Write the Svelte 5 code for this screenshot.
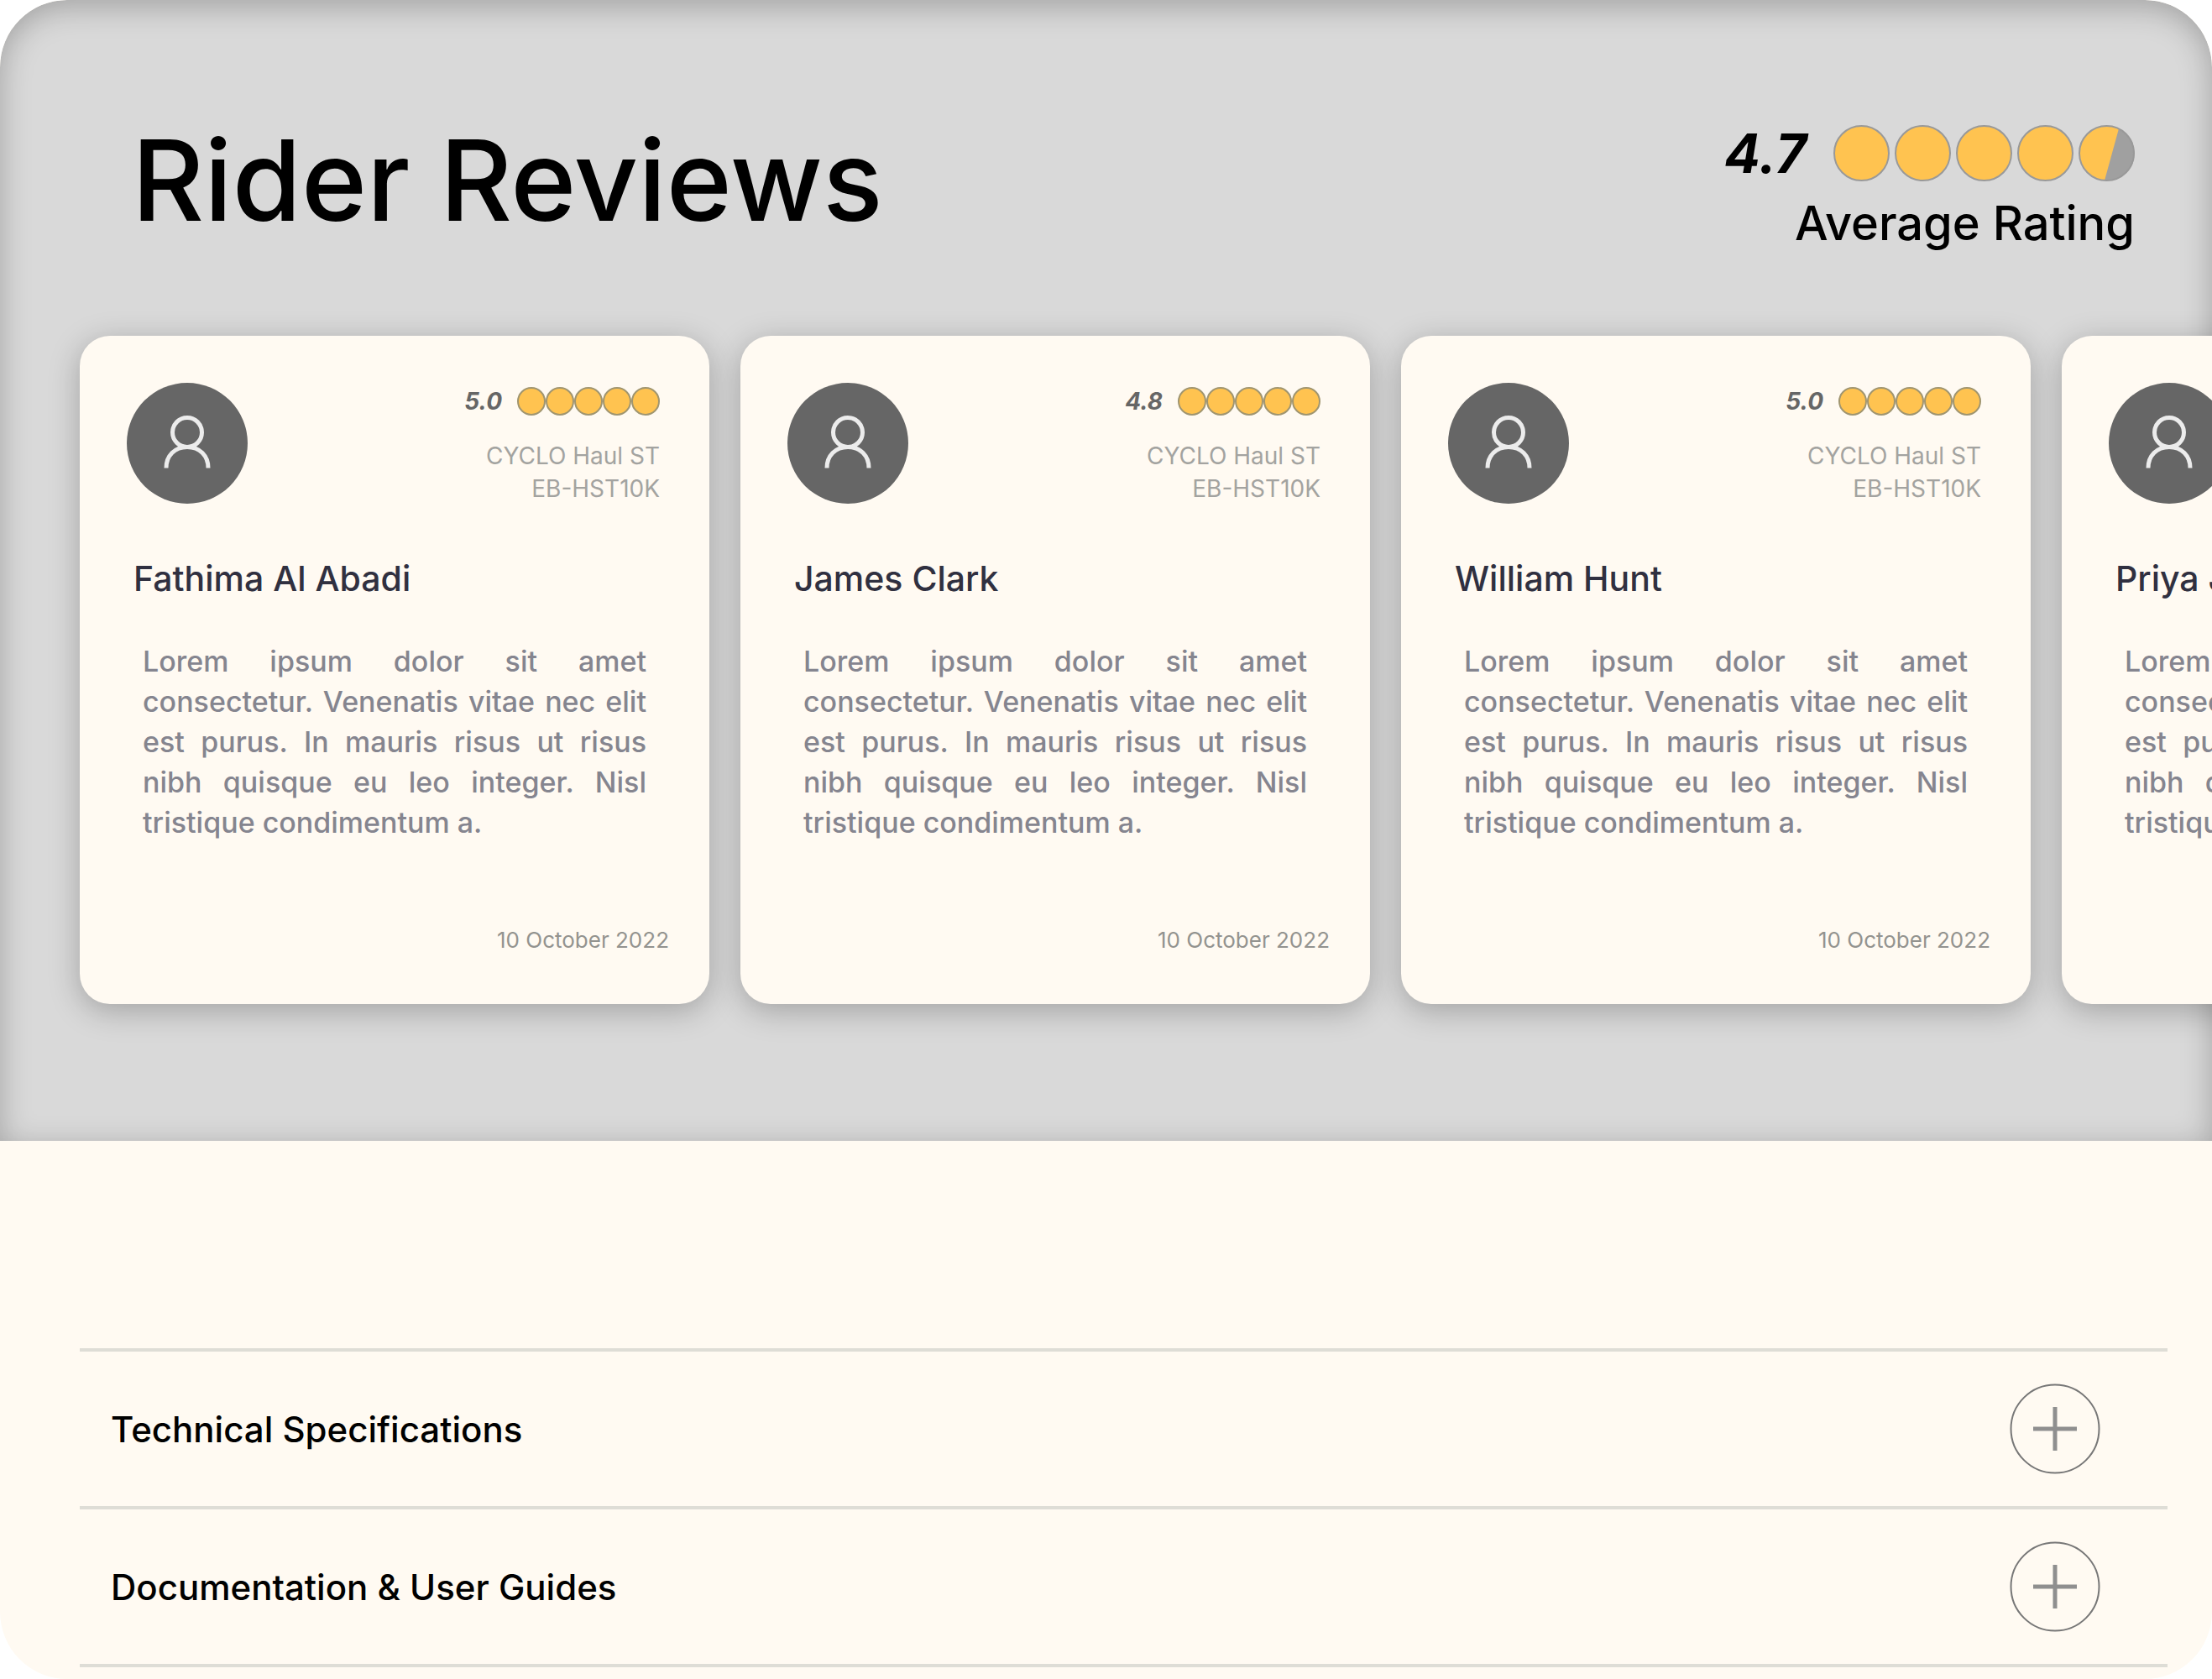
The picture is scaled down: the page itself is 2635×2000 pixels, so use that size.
<script>
  const excerpt =
    'Lorem ipsum dolor sit amet consectetur. Venenatis vitae nec elit est purus. In mauris risus ut risus nibh quisque eu leo integer. Nisl tristique condimentum a.';

  const reviews = [
    { name: 'Fathima Al Abadi', score: '5.0' },
    { name: 'James Clark', score: '4.8' },
    { name: 'William Hunt', score: '5.0' },
    { name: 'Priya Jain', score: '4.9' }
  ];

  const topics = ['Technical Specifications', 'Documentation & User Guides'];
  const dots = [1, 2, 3, 4, 5];

  let open = $state(null);
</script>

<main class="page">
  <section class="reviews">
    <header class="intro">
      <h1>Rider Reviews</h1>
      <div class="average">
        <div class="average-score">
          <strong>4.7</strong>
          <div class="average-dots">
            {#each dots as dot}
              <svg class="dot" viewBox="0 0 67 67" aria-hidden="true">
                <circle class="disc" cx="33.5" cy="33.5" r="32.5" />
                {#if dot === 5}
                  <path class="rest" d="M48 4.2A32.5 32.5 0 0 1 31 66Z" />
                {/if}
                <circle class="ring" cx="33.5" cy="33.5" r="32.5" />
              </svg>
            {/each}
          </div>
        </div>
        <p>Average Rating</p>
      </div>
    </header>

    <div class="cards">
      {#each reviews as review}
        <article class="card">
          <div class="top">
            <svg class="avatar" viewBox="0 0 144 144" aria-hidden="true">
              <circle class="avatar-bg" cx="72" cy="72" r="72" />
              <circle class="person" cx="72" cy="59" r="17.5" />
              <path class="person" d="M47 101.500C47 87 57 76.500 72 76.500S97 87 97 101.500" />
            </svg>
            <div class="meta">
              <div class="score">
                <em>{review.score}</em>
                <div class="score-dots">
                  {#each dots as dot}
                    <span class="small-dot"></span>
                  {/each}
                </div>
              </div>
              <p class="model">CYCLO Haul ST<br />EB-HST10K</p>
            </div>
          </div>
          <h2>{review.name}</h2>
          <p class="text">{excerpt}</p>
          <time datetime="2022-10-10">10 October 2022</time>
        </article>
      {/each}
    </div>
  </section>

  <section class="topics">
    {#each topics as topic, i}
      <button
        class="topic"
        type="button"
        aria-expanded={open === i}
        onclick={() => (open = open === i ? null : i)}
      >
        <span>{topic}</span>
        <svg class="plus" viewBox="0 0 108 108" aria-hidden="true">
          <circle cx="54" cy="54" r="52.5" />
          <path d="M28 54H80M54 28V80" />
        </svg>
      </button>
    {/each}
  </section>
</main>

<style>
  :global(body) {
    margin: 0;
    background: #fff;
  }

  .page {
    overflow: hidden;
    min-height: 100vh;
    box-sizing: border-box;
    border-radius: 80px;
    background: #fffaf2;
    font-family: Inter, 'Liberation Sans', sans-serif;
    color: #000;
  }

  h1,
  h2,
  p {
    margin: 0;
    font-weight: 500;
  }

  .reviews {
    overflow: hidden;
    padding: 145px 0 163px 95px;
    border-radius: 80px 80px 0 0;
    background: #d9d9d9;
    box-shadow: inset 0 8px 36px rgba(0, 0, 0, 0.25);
  }

  .intro {
    display: flex;
    justify-content: space-between;
    align-items: flex-start;
    height: 255px;
    padding: 0 92px 0 62px;
    box-sizing: border-box;
  }

  h1 {
    font-size: 133px;
    line-height: 140px;
  }

  .average {
    display: flex;
    flex-direction: column;
    align-items: flex-end;
    gap: 16px;
    padding-top: 4px;
  }

  .average-score {
    display: flex;
    align-items: center;
    gap: 32px;
  }

  .average strong {
    font-size: 64px;
    line-height: 64px;
    font-style: italic;
    font-weight: 700;
  }

  .average-dots {
    display: flex;
    gap: 6px;
  }

  .average p {
    font-size: 56px;
    line-height: 68px;
  }

  .dot {
    width: 67px;
    height: 67px;
  }

  .disc {
    fill: #ffc350;
  }

  .rest {
    fill: #a0a0a0;
  }

  .ring {
    fill: none;
    stroke: #999;
    stroke-width: 2;
  }

  .cards {
    display: flex;
    gap: 37px;
  }

  .card {
    display: flex;
    flex: 0 0 750px;
    flex-direction: column;
    box-sizing: border-box;
    height: 796px;
    padding: 56px 48px 60px 56px;
    border-radius: 36px;
    background: #fffaf2;
    box-shadow: 0 8px 36px rgba(0, 0, 0, 0.25);
  }

  .top {
    display: flex;
    justify-content: space-between;
    padding-right: 11px;
  }

  .avatar {
    width: 144px;
    height: 144px;
  }

  .avatar-bg {
    fill: #666;
  }

  .person {
    fill: none;
    stroke: #ececec;
    stroke-width: 5;
  }

  .meta {
    display: flex;
    flex-direction: column;
    align-items: flex-end;
    gap: 28px;
    padding-top: 4px;
  }

  .score {
    display: flex;
    align-items: center;
    gap: 18px;
  }

  .score em {
    color: #666;
    font-size: 28px;
    line-height: 36px;
    font-weight: 700;
  }

  .score-dots {
    display: flex;
  }

  .small-dot {
    box-sizing: border-box;
    width: 34px;
    height: 34px;
    border: 2px solid #a0956f;
    border-radius: 50%;
    background: #ffc350;
  }

  .model {
    color: #a3a3a0;
    font-size: 28px;
    line-height: 39px;
    font-weight: 400;
    text-align: right;
  }

  h2 {
    margin: 63px 8px 0;
    color: #303040;
    font-size: 41px;
    line-height: 48px;
  }

  .text {
    margin: 51px 27px 0 19px;
    color: #85858f;
    font-size: 34px;
    line-height: 48px;
    text-align: justify;
  }

  time {
    align-self: flex-end;
    margin-top: auto;
    color: #93938f;
    font-size: 26px;
    line-height: 32px;
  }

  .topics {
    margin: 247px 53px 0 95px;
    border-bottom: 4px solid #deddd6;
  }

  .topic {
    display: flex;
    align-items: center;
    justify-content: space-between;
    box-sizing: border-box;
    width: 100%;
    height: 188px;
    padding: 0 80px 0 37px;
    border: 0;
    border-top: 4px solid #deddd6;
    background: none;
    color: #000;
    font: 500 42px Inter, 'Liberation Sans', sans-serif;
    text-align: left;
    cursor: pointer;
  }

  .plus {
    flex: none;
    width: 108px;
    height: 108px;
    fill: none;
    stroke: #8f8f8f;
    stroke-width: 5;
  }

  .plus circle {
    stroke: #777;
    stroke-width: 2;
  }
</style>
